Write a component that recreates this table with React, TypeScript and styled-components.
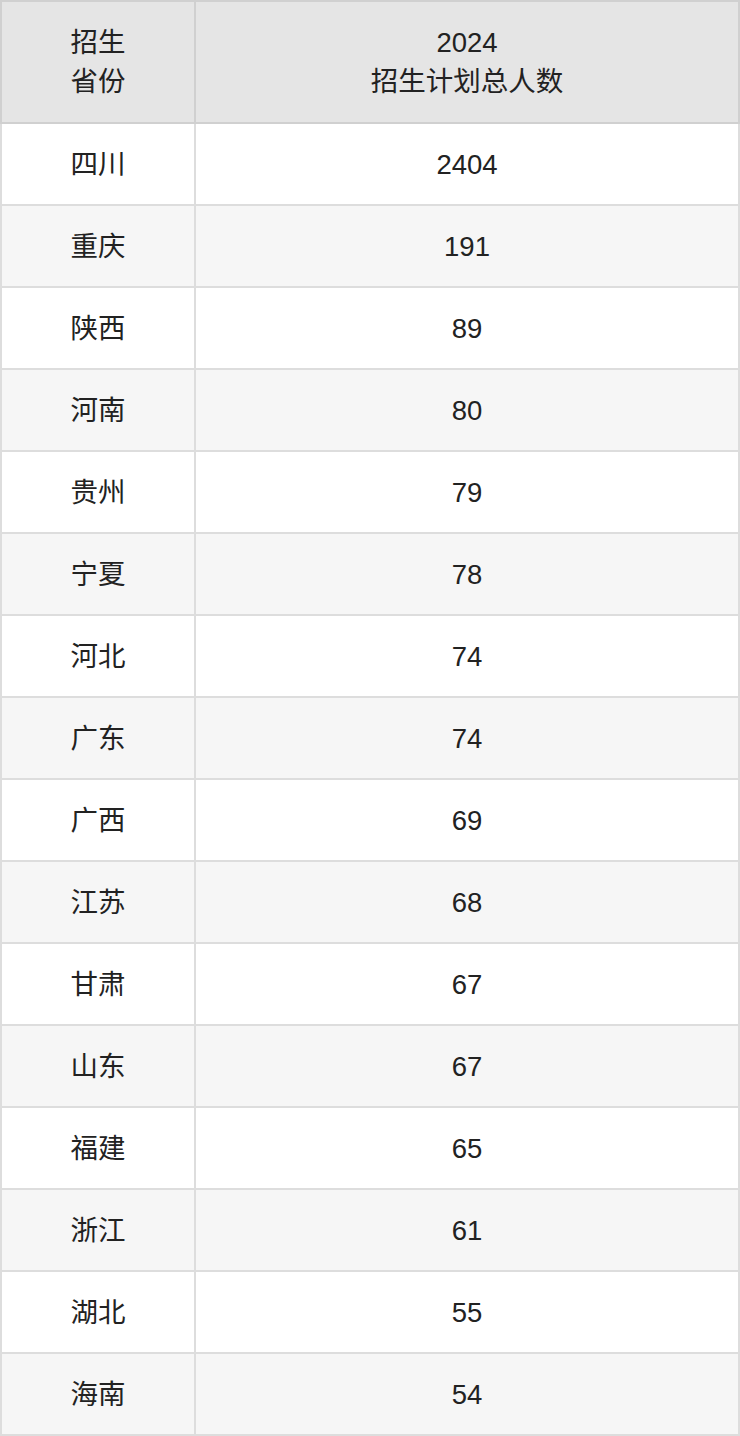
import React from "react";
import styled, { createGlobalStyle } from "styled-components";

const Global = createGlobalStyle`
  html, body { margin: 0; padding: 0; background: #fff; }
  body { font-family: "Liberation Sans", "Noto Sans CJK SC", sans-serif; }
`;

const Table = styled.table`
  width: 740px;
  border-collapse: collapse;
  table-layout: fixed;
  font-size: 27.5px;
  line-height: 39px;
  color: #222;
`;

const HeadCell = styled.th`
  background: #e5e5e5;
  border: 2px solid #d0d0d0;
  font-weight: normal;
  height: 120px;
  padding: 0;
  text-align: center;
  vertical-align: middle;
`;

const Row = styled.tr<{ $alt: boolean }>`
  background: ${(p) => (p.$alt ? "#f6f6f6" : "#ffffff")};
`;

const Cell = styled.td`
  border: 2px solid #dddddd;
  height: 80px;
  padding: 0;
  text-align: center;
  vertical-align: middle;
`;

const data: [string, string][] = [
  ["四川", "2404"],
  ["重庆", "191"],
  ["陕西", "89"],
  ["河南", "80"],
  ["贵州", "79"],
  ["宁夏", "78"],
  ["河北", "74"],
  ["广东", "74"],
  ["广西", "69"],
  ["江苏", "68"],
  ["甘肃", "67"],
  ["山东", "67"],
  ["福建", "65"],
  ["浙江", "61"],
  ["湖北", "55"],
  ["海南", "54"],
];

export default function App() {
  return (
    <>
      <Global />
      <Table>
        <colgroup>
          <col style={{ width: 194 }} />
          <col />
        </colgroup>
        <thead>
          <tr>
            <HeadCell>
              招生
              <br />
              省份
            </HeadCell>
            <HeadCell>
              2024
              <br />
              招生计划总人数
            </HeadCell>
          </tr>
        </thead>
        <tbody>
          {data.map(([p, n], i) => (
            <Row key={i} $alt={i % 2 === 1}>
              <Cell>{p}</Cell>
              <Cell>{n}</Cell>
            </Row>
          ))}
        </tbody>
      </Table>
    </>
  );
}
